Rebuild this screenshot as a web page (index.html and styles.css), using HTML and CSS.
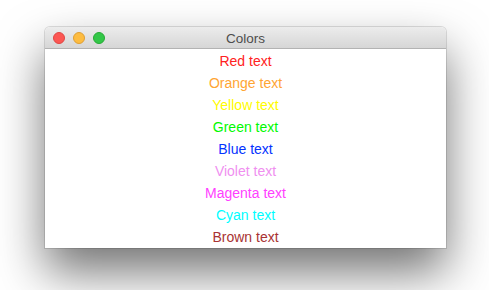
FILE: index.html
```html
<!DOCTYPE html>
<html lang="en">
<head>
    <meta charset="UTF-8">
    <title>Colors</title>
    <link rel="stylesheet" href="styles.css">
</head>
<body>
    <div class="window">
        <div class="titlebar">
            <div class="lights">
                <span class="light close"></span>
                <span class="light minimize"></span>
                <span class="light zoom"></span>
            </div>
            <div class="title">Colors</div>
        </div>
        <div class="content">
            <p class="red">Red text</p>
            <p class="orange">Orange text</p>
            <p class="yellow">Yellow text</p>
            <p class="green">Green text</p>
            <p class="blue">Blue text</p>
            <p class="violet">Violet text</p>
            <p class="magenta">Magenta text</p>
            <p class="cyan">Cyan text</p>
            <p class="brown">Brown text</p>
        </div>
    </div>
</body>
</html>
```
FILE: styles.css
```css
html, body {
    margin: 0;
    height: 100%;
    background-color: #ffffff;
    font-family: "Liberation Sans", Arial, sans-serif;
    overflow: hidden;
}

body {
    padding: 27px 0 0 45px;
    box-sizing: border-box;
}

.window {
    width: 401px;
    background-color: #fff;
    border-radius: 5px 5px 0 0;
    box-shadow: 0 0 0 1px rgba(0, 0, 0, 0.12), 0 24px 48px rgba(0, 0, 0, 0.55);
}

.titlebar {
    position: relative;
    height: 21px;
    display: flex;
    align-items: center;
    justify-content: center;
    background: linear-gradient(#ececec, #d6d6d6);
    border-bottom: 1px solid #b3b3b3;
    border-radius: 5px 5px 0 0;
}

.lights {
    position: absolute;
    left: 8px;
    top: 5px;
    display: flex;
    gap: 8px;
}

.light {
    width: 12px;
    height: 12px;
    border-radius: 50%;
    box-sizing: border-box;
}

.close {
    background-color: #fc5753;
    border: 1px solid #df4744;
}

.minimize {
    background-color: #fdbc40;
    border: 1px solid #de9f34;
}

.zoom {
    background-color: #33c748;
    border: 1px solid #27aa35;
}

.title {
    font-size: 13.5px;
    color: #4d4d4d;
    padding-top: 2px;
}

.content {
    padding: 1px 0 0;
    display: flex;
    flex-direction: column;
    align-items: center;
}

.content p {
    margin: 0;
    height: 22px;
    line-height: 22px;
    font-size: 14px;
}

.red { color: #ff2222; }
.orange { color: #ffa533; }
.yellow { color: #fffb00; }
.green { color: #00f900; }
.blue { color: #0433ff; }
.violet { color: #f08ff0; }
.magenta { color: #ff40ff; }
.cyan { color: #00fdff; }
.brown { color: #a93333; }
```
